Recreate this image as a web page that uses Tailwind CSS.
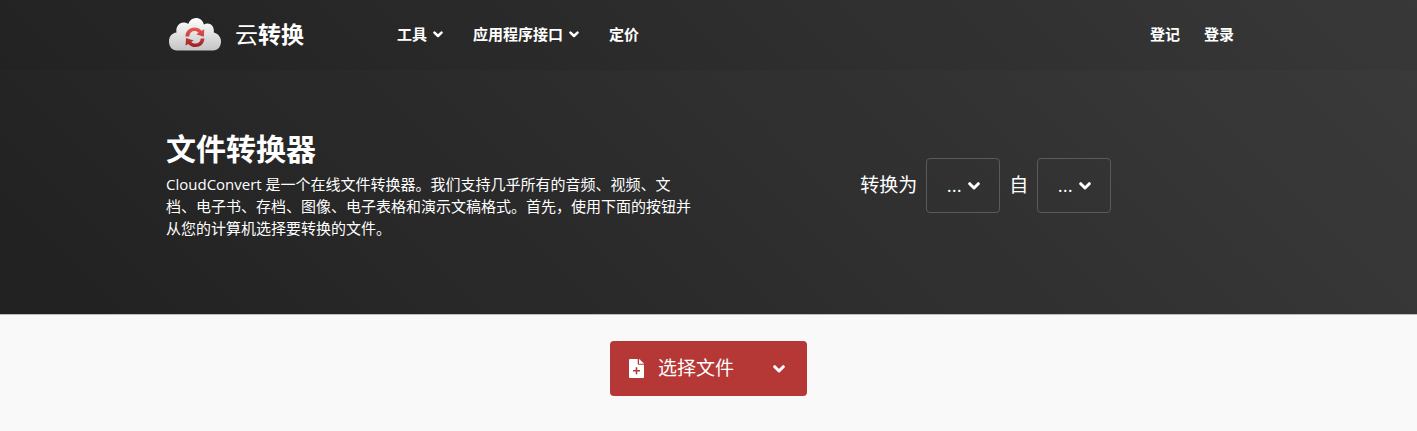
<!DOCTYPE html>
<html lang="zh-CN">
<head>
    <meta charset="UTF-8">
    <meta name="viewport" content="width=device-width, initial-scale=1.0">
    <title>文件转换器 | CloudConvert</title>
    <script src="https://cdn.jsdelivr.net/npm/@tailwindcss/browser@4"></script>
</head>
<body class="min-h-screen bg-[#f9f9f9] font-['Open_Sans','Noto_Sans_CJK_SC',sans-serif] text-white">
    <div class="bg-linear-45 from-[#212121] to-[#3b3b3b] border-b border-[#bdbdbd]">
        <!-- Navbar -->
        <header class="bg-black/5">
            <div class="max-w-[1085px] h-[70px] pb-[2px] mx-auto flex items-center">
                <a href="#" class="flex items-center gap-[14px] pl-[3px]">
                    <svg class="w-[52px] h-[34px]" viewBox="0 0 52 34">
                        <defs>
                            <linearGradient id="cloud" x1="0" y1="0" x2="0" y2="1">
                                <stop offset="0" stop-color="#ffffff"/>
                                <stop offset="1" stop-color="#c4c4c4"/>
                            </linearGradient>
                            <linearGradient id="arrows" gradientUnits="userSpaceOnUse" x1="0" y1="10" x2="0" y2="30">
                                <stop offset="0" stop-color="#ee5a56"/>
                                <stop offset="1" stop-color="#9c1f24"/>
                            </linearGradient>
                        </defs>
                        <path fill="url(#cloud)" d="M8 33.500 C3 33.500 0 29.500 0 24.500 C0 19.500 3 16 7.500 15.500 C6.500 10 10 5.500 14.500 5.500 C16.500 5.500 18 6 19.200 7 C20.500 3 23.500 1 27 1 C31 1 34 3.500 34.800 7.500 C36 6.800 37.300 6.500 38.500 6.500 C43 6.500 45.500 10.500 44.800 15.500 C49 16.500 52 20 52 24.500 C52 29.500 49 33.500 44 33.500 Z"/>
                        <g fill="url(#arrows)">
                            <path d="M16.500 19.500 C16.500 14 20.500 10.500 25.500 10.500 C28.500 10.500 31 11.700 32.700 13.800 L35.300 12.300 L34.800 19.800 L27.200 17.300 L29.600 15.800 C28.500 14.500 27.100 14 25.500 14 C22.500 14 20.500 16 20.200 19.500 Z"/>
                            <path d="M35.500 21.500 C35 26.500 31.500 30 26.500 30 C23.500 30 21 28.900 19.300 26.900 L16.600 28.500 L17 21 L24.700 23.500 L22.300 25 C23.400 26.100 24.800 26.600 26.500 26.600 C29.400 26.600 31.400 24.800 31.800 21.500 Z"/>
                        </g>
                    </svg>
                    <span class="text-[23px] leading-8"><span class="font-normal">云</span><span class="font-bold">转换</span></span>
                </a>
                <nav class="ml-[93px] flex flex-1 items-center text-[15px] font-bold">
                    <button type="button" class="flex items-center gap-[6px] mr-[30px]">工具
                        <svg class="w-[10px] h-[7px]" viewBox="0 0 10 7" fill="none" stroke="currentColor" stroke-width="2.600" stroke-linecap="round" stroke-linejoin="round"><path d="M1.500 1.600 L5 5 L8.500 1.600"/></svg>
                    </button>
                    <button type="button" class="flex items-center gap-[6px] mr-[30px]">应用程序接口
                        <svg class="w-[10px] h-[7px]" viewBox="0 0 10 7" fill="none" stroke="currentColor" stroke-width="2.600" stroke-linecap="round" stroke-linejoin="round"><path d="M1.500 1.600 L5 5 L8.500 1.600"/></svg>
                    </button>
                    <a href="#">定价</a>
                    <a href="#" class="ml-auto mr-6">登记</a>
                    <a href="#" class="mr-[17px]">登录</a>
                </nav>
            </div>
        </header>

        <!-- Hero -->
        <section class="max-w-[1085px] mx-auto grid grid-cols-2 gap-6 items-center pt-[59px] pb-[75px]">
            <div>
                <h1 class="text-[30px] leading-10 font-bold">文件转换器</h1>
                <p class="mt-1 text-[15px] leading-[22px]">CloudConvert 是一个在线文件转换器。我们支持几乎所有的音频、视频、文档、电子书、存档、图像、电子表格和演示文稿格式。首先，使用下面的按钮并从您的计算机选择要转换的文件。</p>
            </div>
            <div class="flex items-center justify-center gap-[9px] pt-[3px] text-[19px]">
                <span>转换为</span>
                <button type="button" class="flex items-center justify-center gap-[6px] w-[74px] h-[55px] rounded border border-[#5a5a5a]">...
                    <svg class="w-[12px] h-[8px]" viewBox="0 0 12 8" fill="none" stroke="currentColor" stroke-width="3" stroke-linecap="round" stroke-linejoin="round"><path d="M1.700 1.700 L6 6 L10.300 1.700"/></svg>
                </button>
                <span>自</span>
                <button type="button" class="flex items-center justify-center gap-[6px] w-[74px] h-[55px] rounded border border-[#5a5a5a]">...
                    <svg class="w-[12px] h-[8px]" viewBox="0 0 12 8" fill="none" stroke="currentColor" stroke-width="3" stroke-linecap="round" stroke-linejoin="round"><path d="M1.700 1.700 L6 6 L10.300 1.700"/></svg>
                </button>
            </div>
        </section>
    </div>

    <!-- File picker -->
    <main class="flex justify-center pt-[26px] pb-9">
        <div class="flex h-[55px] rounded bg-[#b53836] text-[19px]">
            <button type="button" class="flex items-center gap-[14px] pl-[19px] pr-5">
                <svg class="w-[15px] h-[19px]" viewBox="0 0 15 19" fill="currentColor">
                    <path fill-rule="evenodd" d="M1 0 H8.700 V4.800 A1 1 0 0 0 9.700 5.800 H15 V18 A1 1 0 0 1 14 19 H1 A1 1 0 0 1 0 18 V1 A1 1 0 0 1 1 0 Z M6.700 8.300 V11 H4 V12.600 H6.700 V15.300 H8.300 V12.600 H11 V11 H8.300 V8.300 Z"/>
                    <path d="M10 0 L10.400 0.200 L14.700 4.300 L15 4.700 H10 Z"/>
                </svg>
                选择文件
            </button>
            <button type="button" aria-label="更多来源" class="flex items-center pl-[19px] pr-[22px]">
                <svg class="w-[12px] h-[8px]" viewBox="0 0 12 8" fill="none" stroke="currentColor" stroke-width="3" stroke-linecap="round" stroke-linejoin="round"><path d="M1.700 1.700 L6 6 L10.300 1.700"/></svg>
            </button>
        </div>
    </main>
</body>
</html>
